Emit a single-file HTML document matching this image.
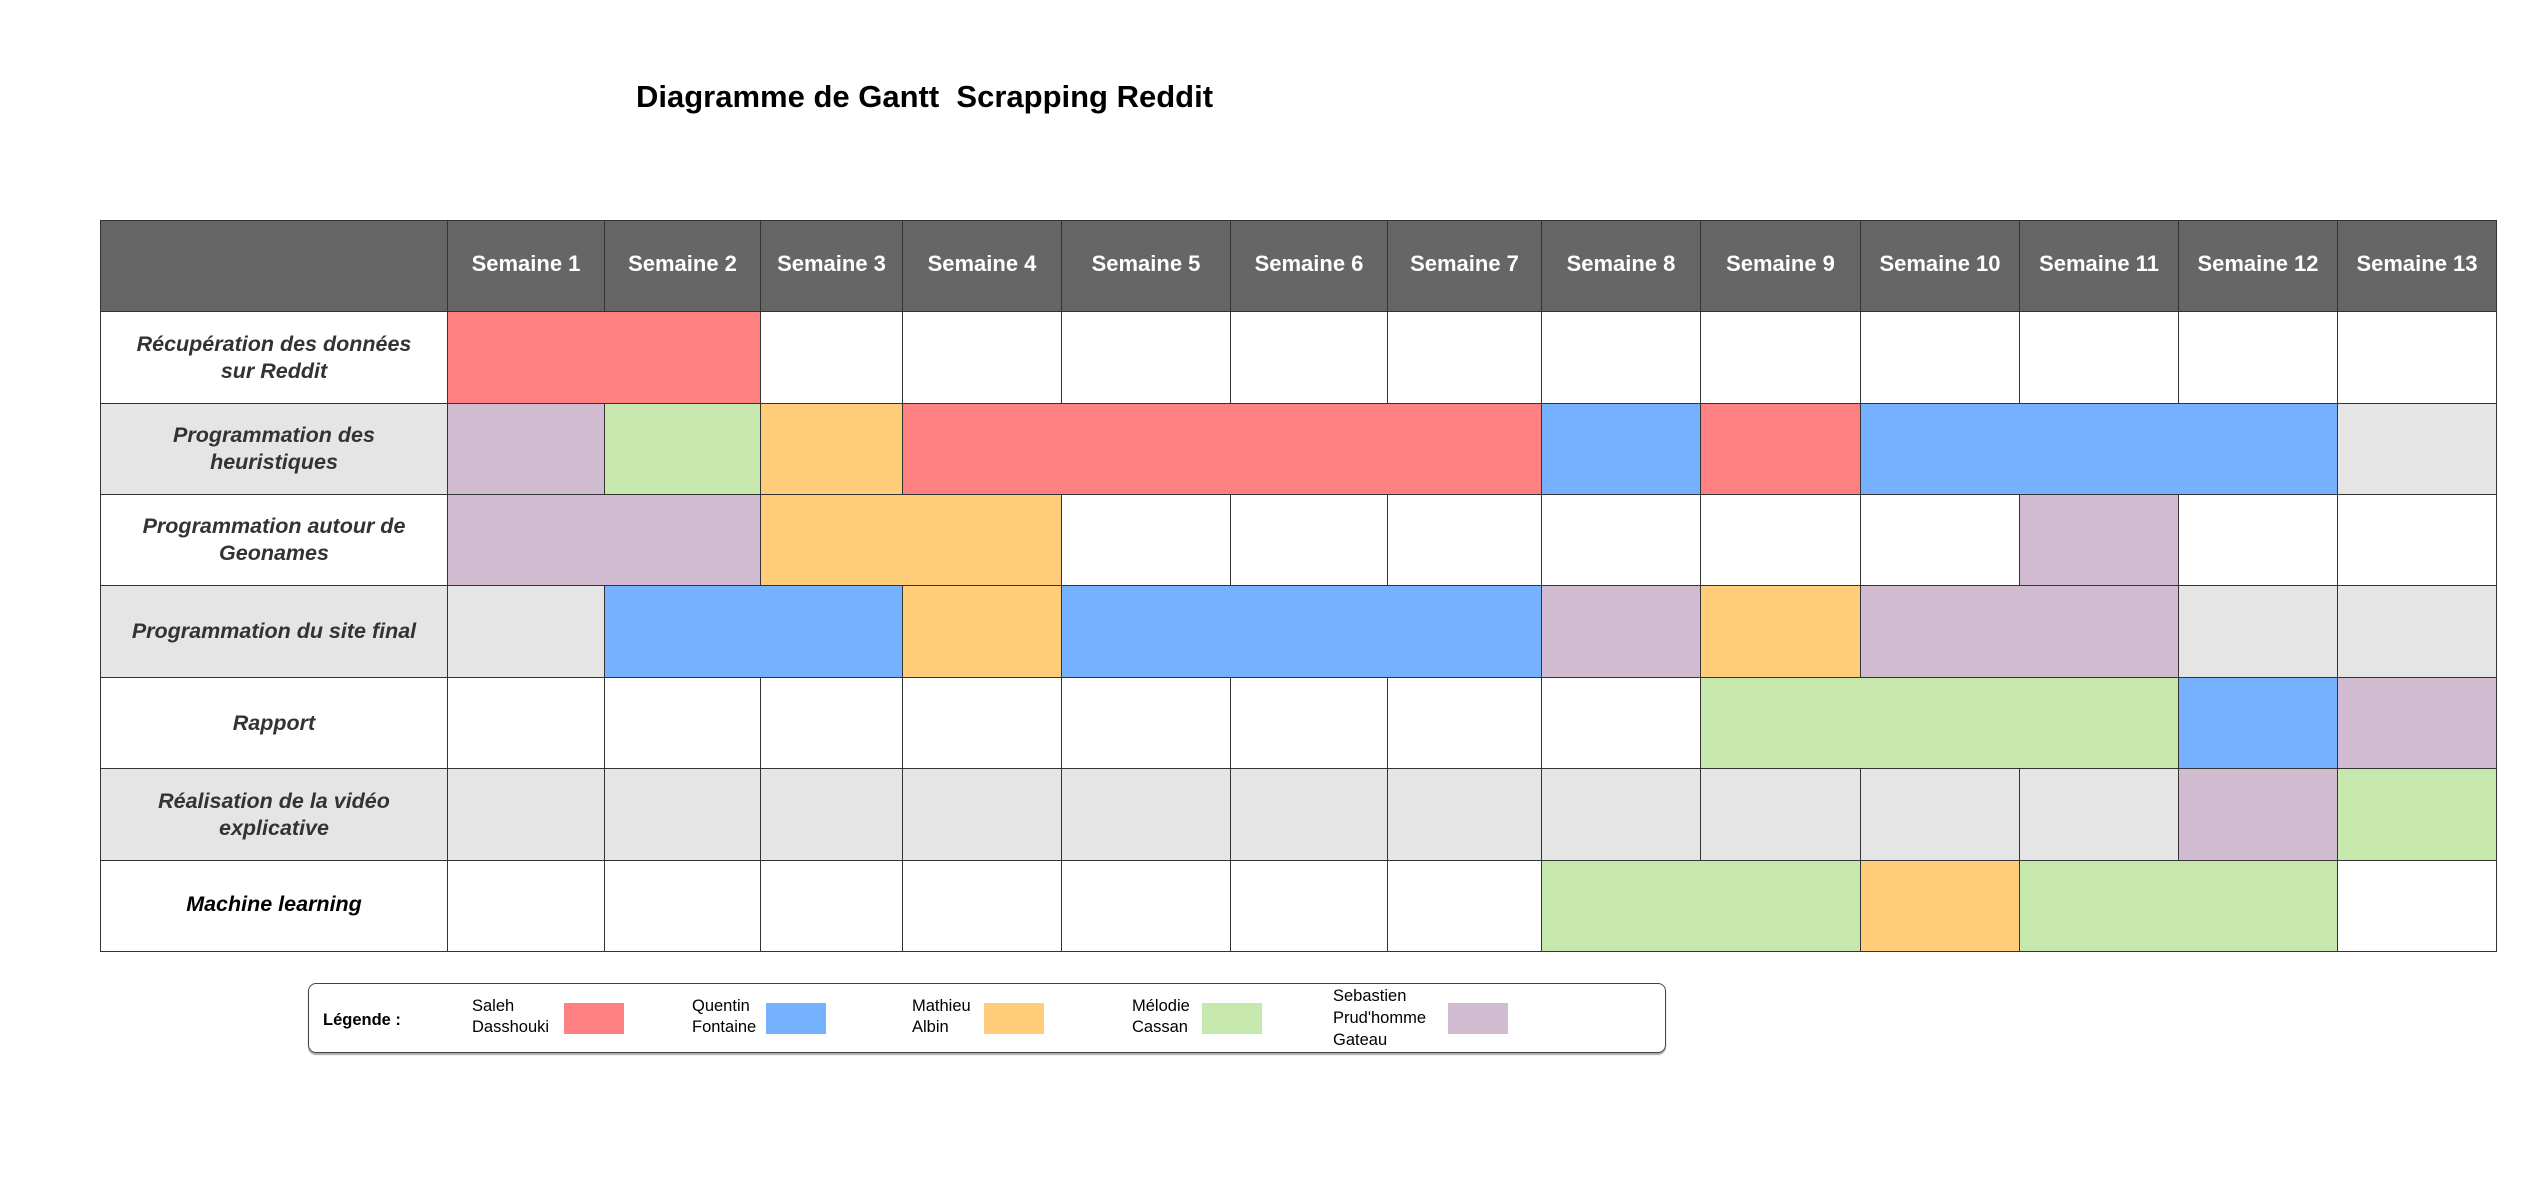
<!DOCTYPE html>
<html><head><meta charset="utf-8"><style>
body{margin:0;width:2540px;height:1196px;background:#fff;position:relative;font-family:"Liberation Sans",sans-serif;overflow:hidden}
#t{position:absolute;left:100px;top:220px;width:2397px;height:732px;background:#333}
#t div{position:absolute;box-sizing:border-box}
.h{background:#666;color:#fff;font-weight:bold;font-size:22px;display:flex;align-items:center;justify-content:center;padding-bottom:4px}
.l{display:flex;align-items:center;justify-content:center;text-align:center;font-weight:bold;font-style:italic;font-size:21.5px;line-height:27px;color:#333}
.w{background:#fff}.g{background:#e5e5e5}.r{background:#ff8080}.b{background:#75b1ff}.o{background:#ffcc7a}.n{background:#c7e8ac}.p{background:#d1bbd1}
.title{position:absolute;left:636px;top:79px;font-size:31px;font-weight:bold;color:#000;white-space:pre}
.leg{position:absolute;left:308px;top:983px;width:1358px;height:70px;box-sizing:border-box;border:1.5px solid #444;border-radius:8px;box-shadow:0 2px 1px #aaa}
.lt{position:absolute;font-size:16.5px;line-height:21px;color:#000}
.sw{position:absolute;top:1003px;width:60px;height:31px}
</style></head><body>
<div class="title">Diagramme de Gantt  Scrapping Reddit</div>
<div id="t">
<div class="h" style="left:1px;top:1px;width:346px;height:90px"></div>
<div class="h" style="left:348px;top:1px;width:156px;height:90px">Semaine 1</div>
<div class="h" style="left:505px;top:1px;width:155px;height:90px">Semaine 2</div>
<div class="h" style="left:661px;top:1px;width:141px;height:90px">Semaine 3</div>
<div class="h" style="left:803px;top:1px;width:158px;height:90px">Semaine 4</div>
<div class="h" style="left:962px;top:1px;width:168px;height:90px">Semaine 5</div>
<div class="h" style="left:1131px;top:1px;width:156px;height:90px">Semaine 6</div>
<div class="h" style="left:1288px;top:1px;width:153px;height:90px">Semaine 7</div>
<div class="h" style="left:1442px;top:1px;width:158px;height:90px">Semaine 8</div>
<div class="h" style="left:1601px;top:1px;width:159px;height:90px">Semaine 9</div>
<div class="h" style="left:1761px;top:1px;width:158px;height:90px">Semaine 10</div>
<div class="h" style="left:1920px;top:1px;width:158px;height:90px">Semaine 11</div>
<div class="h" style="left:2079px;top:1px;width:158px;height:90px">Semaine 12</div>
<div class="h" style="left:2238px;top:1px;width:158px;height:90px">Semaine 13</div>
<div class="l w" style="left:1px;top:92px;width:346px;height:91px">Récupération des données<br>sur Reddit</div>
<div class="r" style="left:348px;top:92px;width:312px;height:91px"></div>
<div class="w" style="left:661px;top:92px;width:141px;height:91px"></div>
<div class="w" style="left:803px;top:92px;width:158px;height:91px"></div>
<div class="w" style="left:962px;top:92px;width:168px;height:91px"></div>
<div class="w" style="left:1131px;top:92px;width:156px;height:91px"></div>
<div class="w" style="left:1288px;top:92px;width:153px;height:91px"></div>
<div class="w" style="left:1442px;top:92px;width:158px;height:91px"></div>
<div class="w" style="left:1601px;top:92px;width:159px;height:91px"></div>
<div class="w" style="left:1761px;top:92px;width:158px;height:91px"></div>
<div class="w" style="left:1920px;top:92px;width:158px;height:91px"></div>
<div class="w" style="left:2079px;top:92px;width:158px;height:91px"></div>
<div class="w" style="left:2238px;top:92px;width:158px;height:91px"></div>
<div class="l g" style="left:1px;top:184px;width:346px;height:90px">Programmation des<br>heuristiques</div>
<div class="p" style="left:348px;top:184px;width:156px;height:90px"></div>
<div class="n" style="left:505px;top:184px;width:155px;height:90px"></div>
<div class="o" style="left:661px;top:184px;width:141px;height:90px"></div>
<div class="r" style="left:803px;top:184px;width:638px;height:90px"></div>
<div class="b" style="left:1442px;top:184px;width:158px;height:90px"></div>
<div class="r" style="left:1601px;top:184px;width:159px;height:90px"></div>
<div class="b" style="left:1761px;top:184px;width:476px;height:90px"></div>
<div class="g" style="left:2238px;top:184px;width:158px;height:90px"></div>
<div class="l w" style="left:1px;top:275px;width:346px;height:90px">Programmation autour de<br>Geonames</div>
<div class="p" style="left:348px;top:275px;width:312px;height:90px"></div>
<div class="o" style="left:661px;top:275px;width:300px;height:90px"></div>
<div class="w" style="left:962px;top:275px;width:168px;height:90px"></div>
<div class="w" style="left:1131px;top:275px;width:156px;height:90px"></div>
<div class="w" style="left:1288px;top:275px;width:153px;height:90px"></div>
<div class="w" style="left:1442px;top:275px;width:158px;height:90px"></div>
<div class="w" style="left:1601px;top:275px;width:159px;height:90px"></div>
<div class="w" style="left:1761px;top:275px;width:158px;height:90px"></div>
<div class="p" style="left:1920px;top:275px;width:158px;height:90px"></div>
<div class="w" style="left:2079px;top:275px;width:158px;height:90px"></div>
<div class="w" style="left:2238px;top:275px;width:158px;height:90px"></div>
<div class="l g" style="left:1px;top:366px;width:346px;height:91px">Programmation du site final</div>
<div class="g" style="left:348px;top:366px;width:156px;height:91px"></div>
<div class="b" style="left:505px;top:366px;width:297px;height:91px"></div>
<div class="o" style="left:803px;top:366px;width:158px;height:91px"></div>
<div class="b" style="left:962px;top:366px;width:479px;height:91px"></div>
<div class="p" style="left:1442px;top:366px;width:158px;height:91px"></div>
<div class="o" style="left:1601px;top:366px;width:159px;height:91px"></div>
<div class="p" style="left:1761px;top:366px;width:317px;height:91px"></div>
<div class="g" style="left:2079px;top:366px;width:158px;height:91px"></div>
<div class="g" style="left:2238px;top:366px;width:158px;height:91px"></div>
<div class="l w" style="left:1px;top:458px;width:346px;height:90px">Rapport</div>
<div class="w" style="left:348px;top:458px;width:156px;height:90px"></div>
<div class="w" style="left:505px;top:458px;width:155px;height:90px"></div>
<div class="w" style="left:661px;top:458px;width:141px;height:90px"></div>
<div class="w" style="left:803px;top:458px;width:158px;height:90px"></div>
<div class="w" style="left:962px;top:458px;width:168px;height:90px"></div>
<div class="w" style="left:1131px;top:458px;width:156px;height:90px"></div>
<div class="w" style="left:1288px;top:458px;width:153px;height:90px"></div>
<div class="w" style="left:1442px;top:458px;width:158px;height:90px"></div>
<div class="n" style="left:1601px;top:458px;width:477px;height:90px"></div>
<div class="b" style="left:2079px;top:458px;width:158px;height:90px"></div>
<div class="p" style="left:2238px;top:458px;width:158px;height:90px"></div>
<div class="l g" style="left:1px;top:549px;width:346px;height:91px">Réalisation de la vidéo<br>explicative</div>
<div class="g" style="left:348px;top:549px;width:156px;height:91px"></div>
<div class="g" style="left:505px;top:549px;width:155px;height:91px"></div>
<div class="g" style="left:661px;top:549px;width:141px;height:91px"></div>
<div class="g" style="left:803px;top:549px;width:158px;height:91px"></div>
<div class="g" style="left:962px;top:549px;width:168px;height:91px"></div>
<div class="g" style="left:1131px;top:549px;width:156px;height:91px"></div>
<div class="g" style="left:1288px;top:549px;width:153px;height:91px"></div>
<div class="g" style="left:1442px;top:549px;width:158px;height:91px"></div>
<div class="g" style="left:1601px;top:549px;width:159px;height:91px"></div>
<div class="g" style="left:1761px;top:549px;width:158px;height:91px"></div>
<div class="g" style="left:1920px;top:549px;width:158px;height:91px"></div>
<div class="p" style="left:2079px;top:549px;width:158px;height:91px"></div>
<div class="n" style="left:2238px;top:549px;width:158px;height:91px"></div>
<div class="l w" style="left:1px;top:641px;width:346px;height:90px;color:#000;padding-bottom:3px">Machine learning</div>
<div class="w" style="left:348px;top:641px;width:156px;height:90px"></div>
<div class="w" style="left:505px;top:641px;width:155px;height:90px"></div>
<div class="w" style="left:661px;top:641px;width:141px;height:90px"></div>
<div class="w" style="left:803px;top:641px;width:158px;height:90px"></div>
<div class="w" style="left:962px;top:641px;width:168px;height:90px"></div>
<div class="w" style="left:1131px;top:641px;width:156px;height:90px"></div>
<div class="w" style="left:1288px;top:641px;width:153px;height:90px"></div>
<div class="n" style="left:1442px;top:641px;width:318px;height:90px"></div>
<div class="o" style="left:1761px;top:641px;width:158px;height:90px"></div>
<div class="n" style="left:1920px;top:641px;width:317px;height:90px"></div>
<div class="w" style="left:2238px;top:641px;width:158px;height:90px"></div>
</div>
<div class="leg"></div>
<div class="lt" style="left:323px;top:1010px;font-weight:bold">Légende :</div>
<div class="lt" style="left:472px;top:996px">Saleh<br>Dasshouki</div>
<div class="sw r" style="left:564px"></div>
<div class="lt" style="left:692px;top:996px">Quentin<br>Fontaine</div>
<div class="sw b" style="left:766px"></div>
<div class="lt" style="left:912px;top:996px">Mathieu<br>Albin</div>
<div class="sw o" style="left:984px"></div>
<div class="lt" style="left:1132px;top:996px">Mélodie<br>Cassan</div>
<div class="sw n" style="left:1202px"></div>
<div class="lt" style="left:1333px;top:985px;line-height:22px">Sebastien<br>Prud'homme<br>Gateau</div>
<div class="sw p" style="left:1448px"></div>
</body></html>
